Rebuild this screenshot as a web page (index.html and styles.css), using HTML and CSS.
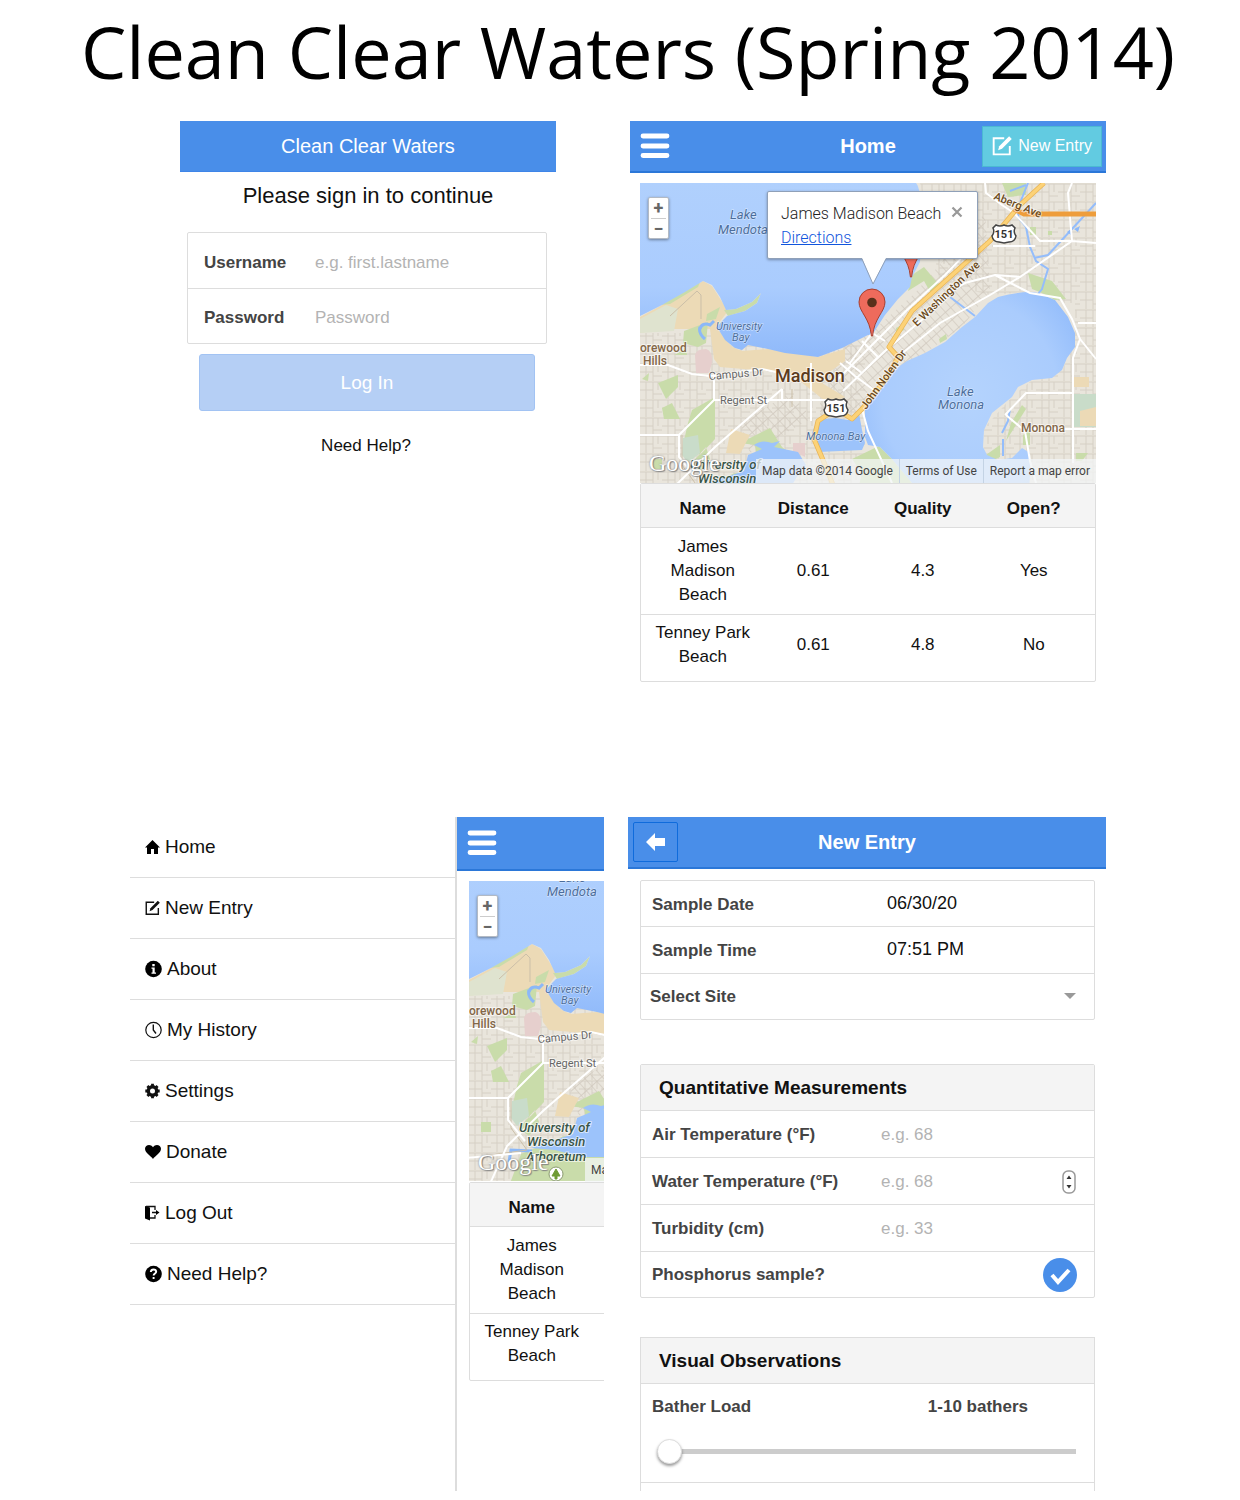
FILE: index.html
```html
<!DOCTYPE html>
<html lang="en">
<head>
<meta charset="utf-8">
<meta name="viewport" content="width=device-width, initial-scale=1">
<title>Clean Clear Waters (Spring 2014)</title>
<link rel="stylesheet" href="styles.css">
</head>
<body>
<svg class="defs" width="0" height="0" aria-hidden="true">
  <defs>
    <pattern id="streets" width="22" height="18" patternUnits="userSpaceOnUse">
      <path d="M0 1H22M0 9H13M6 1V18M13 1V18M18 1V9M13 13H22" fill="none" stroke="#d6d0c5" stroke-width="1"/>
    </pattern>
    <pattern id="blocks" width="7" height="10" patternUnits="userSpaceOnUse" patternTransform="rotate(-42)">
      <path d="M0 0H7M0 0V10" fill="none" stroke="#cfc8bd" stroke-width="1.3"/>
    </pattern>
    <radialGradient id="lake" cx="50%" cy="45%" r="60%">
      <stop offset="0" stop-color="#b4d3fd"/><stop offset=".7" stop-color="#aaccfd"/><stop offset="1" stop-color="#94bdfb"/>
    </radialGradient>
    <linearGradient id="mendota" x1="0" y1="0" x2="0" y2="1">
      <stop offset="0" stop-color="#b0d0fd"/><stop offset=".6" stop-color="#aaccfe"/><stop offset="1" stop-color="#8fb9fa"/>
    </linearGradient>
    <symbol id="terrain" viewBox="0 0 456 340" overflow="visible">
      <rect width="456" height="340" fill="#e9e5dc"/>
      <path d="M0 150H150L225 160V340H0ZM280 0H456V120H420L398 108 350 112 300 100Z" fill="url(#streets)"/>
      <path d="M435 120H456V340H392V290L344 270 344 245 372 214 392 197 422 187 435 160Z" fill="url(#streets)"/>
      <path d="M180 175L228 152 275 110 345 30 350 108 322 144 285 170 258 184 225 227 180 235ZM100 240L150 210 172 235 110 270Z" fill="url(#blocks)"/>
      <path d="M0 150V134L22 122 45 109 63 98 72 103 88 128 76 144 92 164 102 168 128 166 178 174 205 166 205 178 188 190 182 200 205 214 190 222 150 190 80 184 74 176 70 146 20 146Z" fill="#ecdab6"/>
      <path d="M0 150V136L26 122 38 126 34 148ZM394 0" fill="#dfe3cf"/>
      <path d="M0 132L22 121 45 108 60 99 58 104 30 121 20 122ZM44 148L68 139 66 160 58 164 43 160ZM67 131L80 124 76 136 66 138ZM84 127L96 126 112 119 121 110 117 120 105 128 88 133ZM52 227L75 214V256L60 272 43 262 48 240ZM18 200L38 192V204L26 216ZM22 225L32 220 40 236H24ZM66 264L50 282 60 290 70 276ZM100 260L130 245 142 264 165 282 150 300H160V340H40L52 308 95 290 120 292 115 262ZM2 196L9 190 8 198ZM34 172L46 166 47 172ZM12 276H22V286H12Z" fill="#c9dcaa"/>
      <path d="M43 255L58 252 60 270 48 280 42 272Z" fill="#c9dcca"/>
      <path d="M91 246L110 252 100 271 86 270Z" fill="#ecdab6"/>
      <path d="M55 172Q56 166 66 166 73 168 72 180L69 190H56ZM153 260H165V274L153 268Z" fill="#e6cfcd"/>
      <path d="M272 92L284 84 300 103 292 112 284 98 268 108ZM388 90L412 98 426 116 415 117 402 110 392 106ZM362 0H386V12L368 14ZM390 44H396V52H390ZM408 48H412V52H408ZM256 145L264 141 264 147 256 151ZM299 156L306 151 307 156 300 160ZM371 240L382 222 386 226 366 258ZM383 252L390 246V262H383ZM343 274L360 262V274L348 280ZM239 263L252 276 272 300V340H210L222 290 212 276ZM436 270H448L442 278H436Z" fill="#c9dcaa"/>
      <path d="M433 211H456V244H433Z" fill="#c9dcc9"/>
      <path d="M433 194H449V204H433ZM440 228L456 224V243H440Z" fill="#ecdab6"/>
      <path d="M0 0H276Q284 8 280 79L272 94 270 104 258 116 245 132 232 152 228 152 212 160 202 165 178 174 145 170 128 166 108 162 102 167 95 165 85 157 77 144 84 136 87 133 105 128 117 120 121 110 112 119 96 126 86 127 80 114 72 102 63 98 45 109 22 122 0 133Z" fill="url(#mendota)"/>
      <path d="M258 184L267 178 285 170 305 159 322 144 335 134 348 120 358 114Q385 107 398 110L415 117 428 134 435 150V164L427 175 422 187 412 195 392 197 378 204 372 214 352 230 344 247 343 264 347 272 358 277 372 275 382 265 390 270V294L386 340H300L272 300 252 276 240 264 228 262 225 254V227L242 204Z" fill="url(#lake)"/>
      <path d="M177 237L195 235 208 237 219 230 222 247 225 260 222 267 178 269 172 250Z" fill="#9cc3fb"/>
      <path d="M114 262Q122 256 132 260L140 258 134 264 158 269 166 282 158 292 152 302V311H112L86 304 62 302 104 288 108 272 122 266Z" fill="#9cc3fb"/>
      <path d="M60 146Q62 139 70 142L74 138M60 144Q58 150 65 156M63 305L42 304 40 316" fill="none" stroke="#8cb8f8" stroke-width="3"/>
      <path d="M388 0L380 20 378 34 386 44 390 64 396 78 408 86 402 106 398 111M394 75L408 72 456 20M370 226L368 238 362 250M363 256V273M310 114L335 133M370 8L386 2" fill="none" stroke="#94bdfb" stroke-width="2"/>
      <path d="M427 49L431 46 431 52ZM434 46L440 43 438 49Z" fill="#8cb8f8"/>
      <path d="M30 133L57 108 61 112V136M42 252V282L58 304 0 312M152 206V224M42 345Z" fill="none" stroke="#cbbfa8" stroke-width="1"/>
      <g fill="none" stroke="#fff" stroke-width="2">
        <path d="M-2 182H28L52 191 70 193 122 186 140 190M-2 252H39L74 217H200M74 193V217M142 206L142 218M142 206L75 264 38 300 20 340M-2 312L52 307M39 252V274L56 295M171 180V238M200 180L215 193 238 210M196 198L228 166 266 128 305 92 330 66M203 208L245 168 290 130 312 108 325 100 355 92 380 94 432 58 456 60M260 172L300 140 350 112 380 94M210 180L232 150 245 158M222 158L238 174 222 190 206 178M228 218L222 226 228 248 252 300M345 0L346 10 362 22 374 30 400 58 432 58M432 58L428 10 432 0M353 63H395M355 92L390 110 420 115 432 136 440 156 433 175V280M440 156L456 176M365 232L386 210 433 210M386 246H456M366 232L385 248 390 278 396 300M438 140H456M405 150"/>
      </g>
      <path d="M404 0L380 22 350 58 272 128 249 164 258 174 246 196 222 226 212 236 196 226 178 238 174 256 186 284 200 320" fill="none" stroke="#e9b556" stroke-width="5" stroke-linejoin="round"/>
      <path d="M404 0L380 22 350 58 272 128 249 164 258 174 246 196 222 226 212 236 196 226 178 238 174 256 186 284 200 320" fill="none" stroke="#fcd277" stroke-width="3.4" stroke-linejoin="round"/>
      <path d="M374 26L384 31H456" fill="none" stroke="#ee9d3b" stroke-width="5"/>
      <circle cx="87" cy="328" r="7" fill="#fff" stroke="#8a9a70" stroke-width="1"/>
      <path d="M87 323L91 330H88V333H86V330H83Z" fill="#6f9b35" stroke="#6f9b35"/>
    </symbol>
    <symbol id="shield" viewBox="0 0 26 20">
      <path d="M5 1Q9 3 13 1 17 3 21 1L24 4Q22 8 25 12 24 18 18 18L13 19 8 18Q2 18 1 12 4 8 2 4Z" fill="#fff" stroke="#444" stroke-width="1.5"/>
    </symbol>
    <symbol id="pin" viewBox="0 0 28 50">
      <path d="M14 1A13 13 0 0 1 27 14C27 24 16 30 14.600 48H13.400C12 30 1 24 1 14A13 13 0 0 1 14 1Z" fill="#ee6b5c" stroke="#a8402f" stroke-width="1"/>
      <circle cx="14" cy="14.500" r="4.800" fill="#59311b"/>
    </symbol>
    <symbol id="edit" viewBox="0 0 18 18">
      <path d="M11 2H1.500V16.500H16V9" fill="none" stroke="currentColor" stroke-width="1.700"/>
      <path d="M15.400 .300L17.800 2.700 9 11.500 5.500 12.800 6.500 9.200Z" fill="currentColor"/>
    </symbol>
    <symbol id="bars" viewBox="0 0 30 26">
      <path d="M3 3H27M3 13H27M3 22.500H27" stroke="currentColor" stroke-width="4.800" stroke-linecap="round"/>
    </symbol>
  </defs>
</svg>

<h1 class="title">Clean Clear Waters (Spring 2014)</h1>

<main>
  <div class="row row-top">
    <section class="login">
      <header class="bar bar-plain"><h2 class="bar-title light">Clean Clear Waters</h2></header>
      <p class="prompt">Please sign in to continue</p>
      <form>
        <div class="box credentials">
          <div class="cred"><label for="user">Username</label><input id="user" type="text" placeholder="e.g. first.lastname"></div>
          <div class="cred"><label for="pass">Password</label><input id="pass" type="password" placeholder="Password"></div>
        </div>
        <button class="submit" type="button">Log In</button>
      </form>
      <a class="help" href="#help">Need Help?</a>
    </section>

    <section class="home">
      <header class="bar">
        <button class="menu-btn" type="button" aria-label="Menu"><svg width="30" height="26"><use href="#bars"/></svg></button>
        <h2 class="bar-title">Home</h2>
        <button class="new-btn" type="button"><svg width="20" height="20"><use href="#edit"/></svg>New Entry</button>
      </header>
      <div class="content">
        <div class="map">
          <svg class="map-art" viewBox="0 0 456 300" preserveAspectRatio="xMidYMid slice">
            <use href="#terrain" width="456" height="340"/>
            <g class="names">
              <g class="water">
                <text x="90" y="36" class="m">Lake</text><text x="78" y="51" class="m">Mendota</text>
                <text x="76" y="147">University</text><text x="92" y="158">Bay</text>
                <text x="166" y="257">Monona Bay</text>
                <text x="307" y="213" class="m">Lake</text><text x="298" y="226" class="m">Monona</text>
              </g>
              <g class="place"><text x="0" y="169">orewood</text><text x="3" y="182">Hills</text><text x="381" y="249">Monona</text></g>
              <text class="city" x="135" y="199">Madison</text>
              <g class="road">
                <text x="69" y="197" transform="rotate(-5 69 197)">Campus Dr</text><text x="80" y="221">Regent St</text>
              </g>
              <g class="highway">
                <text x="353" y="16" transform="rotate(22 353 16)">Aberg Ave</text>
                <text x="277" y="144" transform="rotate(-44 277 144)">E Washington Ave</text>
                <text x="226" y="227" transform="rotate(-54 226 227)">John Nolen Dr</text>
              </g>
              <g class="park"><text x="50" y="286">University of</text><text x="58" y="300">Wisconsin</text></g>
            </g>
            <use href="#shield" x="351" y="41" width="26" height="20"/><text class="route" x="364" y="55">151</text>
            <use href="#shield" x="183" y="215" width="26" height="20"/><text class="route" x="196" y="229">151</text>
            <use href="#pin" x="257" y="46" width="28" height="50"/>
            <use href="#pin" x="218" y="105" width="28" height="50"/>
          </svg>
          <div class="zoom"><button type="button" aria-label="Zoom in">+</button><button type="button" aria-label="Zoom out">−</button></div>
          <div class="popup">
            <svg class="tail" width="30" height="28" aria-hidden="true"><path d="M3 0L14 26 27 0Z" fill="#fff"/><path d="M3 1L14 26 27 1" fill="none" stroke="#8fa0b8"/></svg>
            <div class="popup-text"><span>James Madison Beach</span><a href="#directions">Directions</a></div>
            <button type="button" aria-label="Close"><svg width="12" height="12"><path d="M1.500 1.500L10.500 10.500M10.500 1.500L1.500 10.500" stroke="#999" stroke-width="2.200"/></svg></button>
          </div>
          <span class="google">Google</span>
          <div class="credits"><span>Map data ©2014 Google</span><a href="#terms">Terms of Use</a><a href="#report">Report a map error</a></div>
        </div>
        <table class="beaches">
          <thead><tr><th>Name</th><th>Distance</th><th>Quality</th><th>Open?</th></tr></thead>
          <tbody>
            <tr><td>James Madison Beach</td><td>0.61</td><td>4.3</td><td>Yes</td></tr>
            <tr><td>Tenney Park Beach</td><td>0.61</td><td>4.8</td><td>No</td></tr>
          </tbody>
        </table>
      </div>
    </section>
  </div>

  <div class="row row-bottom">
    <section class="drawer">
      <nav class="menu">
        <a href="#home"><svg width="15" height="16"><path d="M7.500 1L15 8.500H13V15H9V10H6V15H2V8.500H0Z"/></svg>Home</a>
        <a href="#new"><svg width="15" height="16" viewBox="0 0 18 18"><use href="#edit" width="18" height="18"/></svg>New Entry</a>
        <a href="#about"><svg width="17" height="18"><circle cx="8.500" cy="9" r="8.300"/><path d="M6.500 7.500H9.700V12.500H11V13.800H6.500V12.500H7.500V8.800H6.500ZM7.300 4H9.700V6.200H7.300Z" fill="#fff"/></svg>About</a>
        <a href="#history"><svg width="17" height="18"><circle cx="8.500" cy="9" r="7.700" fill="#fff" stroke="#111" stroke-width="1.200"/><path d="M8.300 3.500V9L11 12.500" fill="none" stroke="#111" stroke-width="1.400"/></svg>My History</a>
        <a href="#settings"><svg width="15" height="16"><circle cx="7.500" cy="8" r="4.200" fill="none" stroke="#111" stroke-width="3.400"/><path d="M7.500 .800V4M7.500 12V15.200M.300 8H3.500M11.500 8H14.700M2.400 2.900L4.700 5.200M10.300 10.800L12.600 13.100M12.600 2.900L10.300 5.200M4.700 10.800L2.400 13.100" stroke="#111" stroke-width="2.800"/></svg>Settings</a>
        <a href="#donate"><svg width="16" height="16"><path d="M8 15C6 12 0 9 0 4.800C0 1 5.500-.500 8 3.300C10.500-.500 16 1 16 4.800C16 9 10 12 8 15Z"/></svg>Donate</a>
        <a href="#logout"><svg width="15" height="16"><path d="M0 1L5 2.500V15.500L0 13.500Z"/><path d="M1 1.500H10V5M10 10V13H5" fill="none" stroke="#111" stroke-width="1.300"/><path d="M7 7.500H12" stroke="#111" stroke-width="1.500"/><path d="M11 5L14.500 7.500 11 10Z"/></svg>Log Out</a>
        <a href="#help"><svg width="17" height="18"><circle cx="8.500" cy="9" r="8.300"/><path d="M5.800 7Q6 4.500 8.500 4.500T11.200 6.800C11.200 8.500 8.600 8.600 8.600 10.600M8.600 12V14" fill="none" stroke="#fff" stroke-width="1.900"/></svg>Need Help?</a>
      </nav>
      <div class="peek">
        <header class="bar">
          <button class="menu-btn" type="button" aria-label="Menu"><svg width="30" height="26"><use href="#bars"/></svg></button>
        </header>
        <div class="content">
          <div class="map">
            <svg class="map-art" viewBox="0 35 456 300" preserveAspectRatio="xMinYMin slice">
              <use href="#terrain" width="456" height="340"/>
              <g class="names">
                <g class="water">
                  <text x="90" y="36" class="m">Lake</text><text x="78" y="50" class="m">Mendota</text>
                  <text x="76" y="147">University</text><text x="92" y="158">Bay</text>
                </g>
                <g class="place"><text x="0" y="169">orewood</text><text x="3" y="182">Hills</text></g>
                <g class="road">
                  <text x="69" y="197" transform="rotate(-5 69 197)">Campus Dr</text><text x="80" y="221">Regent St</text>
                </g>
                <g class="park"><text x="50" y="286">University of</text><text x="58" y="300">Wisconsin</text><text x="57" y="315">Arboretum</text></g>
              </g>
            </svg>
            <div class="zoom"><button type="button" aria-label="Zoom in">+</button><button type="button" aria-label="Zoom out">−</button></div>
            <span class="google">Google</span>
            <div class="credits"><span>Map data ©2014 Google</span><a href="#terms">Terms of Use</a><a href="#report">Report a map error</a></div>
          </div>
          <table class="beaches">
            <thead><tr><th>Name</th><th></th><th></th><th></th></tr></thead>
            <tbody>
              <tr><td>James Madison Beach</td><td></td><td></td><td></td></tr>
              <tr><td>Tenney Park Beach</td><td></td><td></td><td></td></tr>
            </tbody>
          </table>
        </div>
      </div>
    </section>

    <section class="entry">
      <header class="bar">
        <button class="back" type="button" aria-label="Back"><svg width="20" height="18"><path d="M0 9L9 0V5H19V13H9V18Z" fill="#fff"/></svg></button>
        <h2 class="bar-title">New Entry</h2>
      </header>
      <form class="sheets">
        <div class="box">
          <div class="field"><label for="date">Sample Date</label><input class="stamp" id="date" type="text" value="06/30/20"></div>
          <div class="field"><label for="time">Sample Time</label><input class="stamp" id="time" type="text" value="07:51 PM"></div>
          <div class="field pick">
            <select aria-label="Select Site"><option>Select Site</option></select>
            <svg width="12" height="7" aria-hidden="true"><path d="M0 0H12L6 6Z" fill="#999"/></svg>
          </div>
        </div>
        <div class="box">
          <h3>Quantitative Measurements</h3>
          <div class="field"><label for="air">Air Temperature (°F)</label><input id="air" type="number" placeholder="e.g. 68"></div>
          <div class="field"><label for="water">Water Temperature (°F)</label><input id="water" type="number" placeholder="e.g. 68">
            <svg class="stepper" width="14" height="24" aria-hidden="true"><rect x="1" y="1" width="12" height="22" rx="5" fill="#fff" stroke="#999" stroke-width="1.500"/><path d="M4.500 9L7 5.500 9.500 9ZM4.500 15L7 18.500 9.500 15Z" fill="#333"/></svg></div>
          <div class="field"><label for="turbidity">Turbidity (cm)</label><input id="turbidity" type="number" placeholder="e.g. 33"></div>
          <div class="field toggle"><label for="phos">Phosphorus sample?</label>
            <span class="tick"><input id="phos" type="checkbox" checked><svg width="34" height="34" aria-hidden="true"><path d="M9 17L15 24 26 12" fill="none" stroke="#fff" stroke-width="4"/></svg></span></div>
        </div>
        <div class="box last">
          <h3>Visual Observations</h3>
          <div class="load">
            <div class="load-head"><label for="bathers">Bather Load</label><output for="bathers">1-10 bathers</output></div>
            <input id="bathers" type="range" min="0" max="10" value="0">
          </div>
        </div>
      </form>
    </section>
  </div>
</main>
</body>
</html>
```
FILE: styles.css
```css
:root {
  --blue: #498ee9;
  --line: #ddd;
}
* { box-sizing: border-box; }
body {
  margin: 0;
  background: #fff;
  color: #111;
  font: 17px/24px "Liberation Sans", Arial, sans-serif;
}
button, input, select { font: inherit; }
button { padding: 0; border: 0; background: none; color: inherit; }
a { color: inherit; text-decoration: none; }
svg { display: block; flex: none; }
.defs { position: absolute; }

.title {
  margin: 0;
  padding: 3px 0 22px 16px;
  font: 500 72px/96px "Trebuchet MS", "Open Sans", sans-serif;
  color: #000;
  text-align: center;
  white-space: nowrap;
}

.row { display: grid; }
.row-top { grid-template-columns: 376fr 476fr; gap: 74px; padding: 0 134px 0 180px; }
.row-bottom { grid-template-columns: 474fr 478fr; gap: 24px; padding: 125px 134px 8px 130px; }
section { min-width: 0; }

.bar {
  display: grid;
  grid-template-columns: 1fr auto 1fr;
  align-items: center;
  height: 52px;
  background: var(--blue);
  border-bottom: 2px solid #2b77d8;
  color: #fff;
}
.bar-plain { height: 51px; border-bottom: 1px solid #3f85e8; }
.bar-title { grid-column: 2; margin: 0; font-size: 20px; line-height: 24px; }
.bar-title.light { font-weight: 400; }
.menu-btn { justify-self: start; margin-left: 10px; }
.new-btn {
  display: flex;
  align-items: center;
  justify-self: end;
  gap: 6px;
  height: 41px;
  margin-right: 4px;
  padding: 0 9px;
  background: #62cbe1;
  border: 1px solid #4bb9d3;
  font-size: 16px;
}

/* Sign in */
.prompt { margin: 12px 0 24px; font-size: 22px; text-align: center; }
.box { border: 1px solid var(--line); border-radius: 2px; }
label, .pick select, output { font-weight: 700; color: #444; }
input { min-width: 0; padding: 0; border: 0; background: none; color: #111; outline: 0; }
input::placeholder { color: #b3b3b3; opacity: 1; }
.credentials { margin: 0 9px 10px 7px; }
.cred {
  display: grid;
  grid-template-columns: 111px 1fr;
  align-items: center;
  height: 55px;
  padding: 4px 16px 0;
}
.cred + .cred { border-top: 1px solid var(--line); }
.submit {
  display: block;
  width: calc(100% - 40px);
  height: 57px;
  margin: 0 21px 0 19px;
  background: #b5cff5;
  border: 1px solid #a2c3f3;
  border-radius: 3px;
  color: #fff;
  font-size: 19px;
}
.help { display: block; margin-top: 23px; padding-right: 4px; text-align: center; }

/* Map */
.content { padding: 10px; }
.map { position: relative; height: 300px; overflow: hidden; }
.map-art { width: 100%; height: 300px; }
.names text {
  font: 500 12px Roboto, sans-serif;
  paint-order: stroke;
  stroke: #fff;
  stroke-opacity: .6;
  stroke-width: 2px;
  fill: #666;
}
.names .water text { font-size: 11px; font-style: italic; font-weight: 400; fill: #4a6d9c; stroke-width: 1px; }
.names .water .m { font-size: 13px; }
.names .place text { fill: #836748; font-size: 12px; }
.names .city { fill: #5b3a1c; font-size: 18px; }
.names .road text { font-size: 11px; font-weight: 400; }
.names .highway text { font-size: 11px; fill: #6b4a20; }
.names .park text { font-size: 13px; font-style: italic; fill: #395548; }
.route { font: 700 11px Roboto, sans-serif; text-anchor: middle; fill: #333; }
.zoom {
  position: absolute;
  top: 14px;
  left: 8px;
  width: 21px;
  padding: 0 2px;
  background: #fff;
  border: 1px solid #b3bac4;
  border-radius: 2px;
  box-shadow: 0 1px 3px #0006;
}
.zoom button {
  display: block;
  width: 100%;
  height: 20px;
  color: #666;
  font: 700 18px/18px Roboto, sans-serif;
}
.zoom button + button { border-top: 1px solid #ccc; }
.popup {
  position: absolute;
  top: 8px;
  left: calc(50% - 101px);
  display: flex;
  justify-content: space-between;
  align-items: flex-start;
  width: 211px;
  height: 68px;
  padding: 10px 14px 12px 13px;
  background: #fff;
  border: 1px solid #8fa0b8;
  border-radius: 2px;
  box-shadow: 0 1px 3px #0005;
  font: 300 16px/24px Roboto, sans-serif;
  color: #222;
}
.popup button { margin-top: 4px; }
.popup-text { display: grid; white-space: nowrap; }
.popup-text a { color: #15d; text-decoration: underline; }
.tail { position: absolute; top: 66px; left: 91px; }
.google {
  position: absolute;
  bottom: 6px;
  left: 9px;
  font: 24px/28px "Liberation Serif", serif;
  color: #fff;
  text-shadow: 0 0 2px #777, 1px 1px 1px #888;
}
.credits {
  position: absolute;
  right: 0;
  bottom: 0;
  display: flex;
  background: #f3f5f7bb;
  color: #444;
  font: 12px/24px Roboto, sans-serif;
  white-space: nowrap;
}
.credits > * { padding: 0 6px; }
.credits a { border-left: 1px solid #c4d3e4; }

/* Beach table */
.beaches {
  width: 100%;
  border: 1px solid var(--line);
  border-collapse: separate;
  border-spacing: 0;
  border-radius: 2px;
  table-layout: fixed;
  text-align: center;
}
.beaches th { height: 44px; padding: 7px 0 0; background: #f4f4f4; border-bottom: 1px solid var(--line); }
.beaches td { height: 86px; padding: 0; }
.beaches tr + tr td { height: 67px; padding-bottom: 6px; border-top: 1px solid var(--line); }
.beaches tr > :first-child { padding-left: 10px; }
.beaches tr > :nth-child(2) { padding-left: 4px; }
.beaches tr > :nth-child(3) { padding-right: 4px; }
.beaches tr > :last-child { padding-right: 9px; }

/* Side menu */
.drawer { display: flex; }
.menu { flex: 1; min-width: 0; }
.menu a {
  display: flex;
  align-items: center;
  gap: 5px;
  height: 61px;
  padding-left: 15px;
  border-bottom: 1px solid var(--line);
  font-size: 19px;
}
.peek {
  width: 149px;
  overflow: hidden;
  border-left: 2px solid var(--line);
}
.peek .bar { height: 54px; }
.peek .content { width: 478px; padding-left: 12px; }
.peek .map { height: 301px; }

/* Entry form */
.back {
  display: grid;
  place-items: center;
  width: 45px;
  height: 40px;
  margin-left: 5px;
  border: 1px solid #0f6bdc;
  border-radius: 2px;
}
.sheets { padding: 11px 11px 0 12px; }
.sheets .box + .box { margin-top: 44px; }
.sheets .box.last { margin-top: 39px; padding-bottom: 8px; border-bottom: 0; border-radius: 0; }
.sheets h3 {
  margin: 0;
  padding: 11px 18px 10px;
  background: #f4f4f4;
  font-size: 19px;
  line-height: 24px;
}
.field {
  display: grid;
  grid-template-columns: 229px 1fr auto;
  align-items: center;
  height: 47px;
  padding: 2px 18px 0 11px;
  border-top: 1px solid var(--line);
}
.field:first-child { height: 45px; border-top: 0; }
.field .stamp { padding: 0 0 4px 6px; font-size: 18px; }
input[type=number] { appearance: textfield; }
.field.pick { height: 46px; grid-template-columns: 1fr auto; padding: 0 18px 0 9px; }
.pick select { padding: 0; border: 0; appearance: none; background: none; }
.field.toggle { height: 46px; grid-template-columns: 1fr auto; padding: 0 17px 0 11px; }
.tick { display: grid; }
.tick > * { grid-area: 1 / 1; }
.tick input { width: 34px; height: 34px; margin: 0; appearance: none; background: var(--blue); border-radius: 50%; }
.tick svg { z-index: 1; pointer-events: none; }
.load { padding: 11px 18px 18px 11px; border-top: 1px solid var(--line); border-bottom: 1px solid var(--line); }
.load-head { display: flex; justify-content: space-between; padding-right: 48px; }
input[type=range] {
  display: block;
  width: calc(100% - 5px);
  height: 26px;
  margin: 19px 0 0 5px;
  appearance: none;
  background: linear-gradient(#ccc, #ccc) center / 100% 5px no-repeat;
}
input[type=range]::-webkit-slider-thumb {
  width: 25px;
  height: 25px;
  appearance: none;
  background: #fff;
  border: 1px solid #ddd;
  border-radius: 50%;
  box-shadow: 0 2px 3px #0006;
}
```
